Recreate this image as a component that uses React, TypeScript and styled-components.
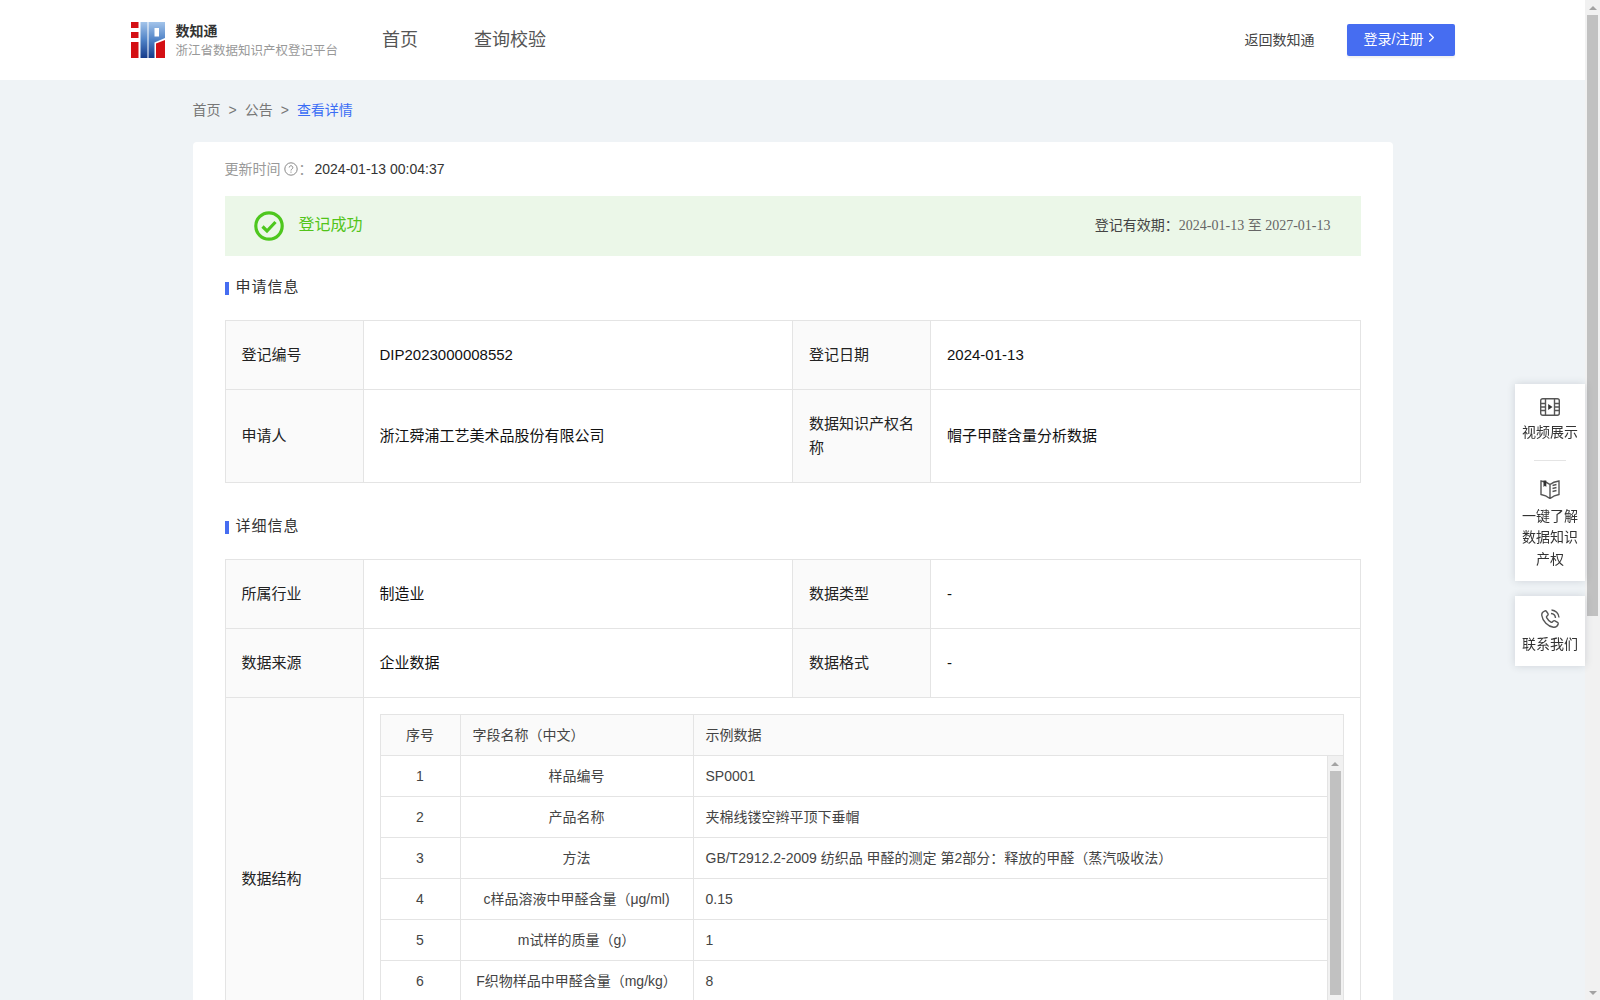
import React from "react";
import styled, { createGlobalStyle } from "styled-components";
import { ChevronRight } from "lucide-react";

const GlobalStyle = createGlobalStyle`
  body {
    margin: 0;
    background: #eff3f6;
    color: #333;
    font-family: "Liberation Sans", "Noto Sans CJK SC", sans-serif;
    font-size: 14px;
  }
`;

const Shell = styled.div`
  display: flex;
  height: 100vh;
  overflow: hidden;
`;

const Content = styled.div`
  flex: 1;
  min-width: 0;
  overflow: hidden;
`;

const Rail = styled.div`
  flex: none;
  width: 15px;
  background: #f1f1f1;
  display: flex;
  flex-direction: column;
  align-items: center;
`;

const RailArrow = styled.div<{ $down?: boolean }>`
  flex: none;
  width: 15px;
  height: 15px;
  margin-top: ${(props) => (props.$down ? "auto" : "0")};
  display: flex;
  align-items: center;
  justify-content: center;

  &::before {
    content: "";
    border-left: 4px solid transparent;
    border-right: 4px solid transparent;
    border-bottom: ${(props) => (props.$down ? "0" : "4px solid #a3a3a3")};
    border-top: ${(props) => (props.$down ? "4px solid #a3a3a3" : "0")};
  }
`;

const RailThumb = styled.div<{ $height: number }>`
  flex: none;
  width: 11px;
  height: ${(props) => props.$height}px;
  background: #c1c1c1;
`;

const Header = styled.header`
  height: 80px;
  background: #fff;
`;

const HeaderInner = styled.div`
  width: 1324px;
  height: 100%;
  margin: 0 auto;
  display: flex;
  align-items: center;
`;

const Brand = styled.a`
  display: flex;
  align-items: center;
  gap: 11px;
`;

const BrandText = styled.div`
  display: flex;
  flex-direction: column;
  margin-top: 2px;
`;

const BrandName = styled.span`
  font-size: 14px;
  line-height: 20px;
  font-weight: bold;
  color: #333;
`;

const BrandSub = styled.span`
  font-size: 12.5px;
  line-height: 20px;
  color: #999;
`;

const Nav = styled.nav`
  display: flex;
  gap: 56px;
  margin-left: 44px;
  margin-top: -4px;
`;

const NavLink = styled.a`
  font-size: 18px;
  color: #555;
`;

const HeaderRight = styled.div`
  margin-left: auto;
  display: flex;
  align-items: center;
  gap: 32px;
`;

const BackLink = styled.a`
  padding-bottom: 2px;
  font-size: 14px;
  color: #444;
`;

const LoginButton = styled.button`
  width: 108px;
  height: 32px;
  padding: 0 0 5px 2px;
  border: none;
  border-radius: 2px;
  background: #466df1;
  box-shadow: 0 2px 2px rgba(0, 0, 0, 0.06);
  color: #fff;
  font: inherit;
  font-size: 14px;
  display: flex;
  align-items: center;
  justify-content: center;
  gap: 1px;
`;

const Main = styled.main`
  width: 1200px;
  margin: 0 auto;
`;

const Breadcrumb = styled.div`
  display: flex;
  align-items: center;
  gap: 8px;
  padding: 20px 0 22px;
  line-height: 20px;
  color: #777;
`;

const Crumb = styled.span<{ $active?: boolean }>`
  color: ${(props) => (props.$active ? "#3b6df5" : "#777")};
`;

const Card = styled.section`
  padding: 16px 32px 32px;
  background: #fff;
  border-radius: 4px;
`;

const UpdateRow = styled.div`
  display: flex;
  align-items: center;
  line-height: 22px;
  color: #999;
`;

const UpdateValue = styled.span`
  margin-left: 2px;
  color: #333;
`;

const HelpIcon = styled.svg`
  width: 14px;
  height: 14px;
  margin: 0 1px 0 3px;
`;

const StatusBar = styled.div`
  height: 60px;
  margin-top: 16px;
  padding: 0 30px 0 29px;
  background: #ebf7e8;
  display: flex;
  align-items: center;
  justify-content: space-between;
`;

const StatusLeft = styled.div`
  display: flex;
  align-items: center;
  gap: 15px;
  font-size: 16px;
  color: #52c41a;
`;

const StatusText = styled.span`
  padding-bottom: 6px;
`;

const StatusDates = styled.div`
  padding-bottom: 4px;
  color: #444;
`;

const SerifDates = styled.span`
  font-family: "Liberation Serif", "Noto Sans CJK SC", serif;
  color: #666;
`;

const SectionTitle = styled.h3`
  margin: 20px 0 22px;
  display: flex;
  align-items: center;
  gap: 7px;
  font-size: 15px;
  line-height: 22px;
  font-weight: normal;
  letter-spacing: 1px;
  color: #333;

  &::before {
    content: "";
    width: 4px;
    height: 13px;
    margin-top: 2px;
    background: #466df1;
  }
`;

const InfoTable = styled.table`
  width: 1136px;
  margin-bottom: 32px;
  table-layout: fixed;
  border-collapse: collapse;
  font-size: 15px;
  line-height: 24px;
`;

const LabelCell = styled.th`
  width: 138px;
  box-sizing: border-box;
  padding: 22px 16px;
  border: 1px solid #e4e4e4;
  background: #fafafa;
  font-weight: normal;
  text-align: left;
  color: #222;
`;

const ValueCell = styled.td`
  padding: 22px 16px;
  border: 1px solid #e4e4e4;
  color: #111;
`;

const StructureCell = styled.td`
  padding: 16px;
  border: 1px solid #e4e4e4;
`;

const FieldTable = styled.div`
  border: 1px solid #e4e4e4;
  border-bottom: none;
  font-size: 14px;
  color: #444;
`;

const FieldRow = styled.div<{ $head?: boolean }>`
  display: grid;
  grid-template-columns: 79px 233px 1fr;
  height: 41px;
  box-sizing: border-box;
  border-bottom: 1px solid #e4e4e4;
  background: ${(props) => (props.$head ? "#fafafa" : "#fff")};
`;

const FieldCell = styled.div<{ $center?: boolean }>`
  display: flex;
  align-items: center;
  padding: 0 12px;
  justify-content: ${(props) => (props.$center ? "center" : "flex-start")};
  white-space: nowrap;

  & + & {
    border-left: 1px solid #e4e4e4;
  }
`;

const FieldBody = styled.div`
  display: flex;
  height: 287px;
`;

const FieldRows = styled.div`
  flex: 1;
  min-width: 0;
  border-right: 1px solid #e4e4e4;
`;

const SidePanel = styled.aside`
  position: fixed;
  top: 384px;
  right: 15px;
  width: 70px;
  display: flex;
  flex-direction: column;
  gap: 15px;
`;

const SideGroup = styled.div<{ $bottom: number }>`
  padding: 13px 0 ${(props) => props.$bottom}px;
  background: #fff;
  box-shadow: 0 0 8px rgba(40, 50, 70, 0.16);
  display: flex;
  flex-direction: column;
  align-items: center;
`;

const SideDivider = styled.div`
  width: 32px;
  height: 1px;
  margin: 16px 0 18px;
  background: #e4e4e4;
`;

const SideItem = styled.a<{ $gap: number }>`
  width: 60px;
  display: flex;
  flex-direction: column;
  align-items: center;
  gap: ${(props) => props.$gap}px;
  font-size: 14px;
  line-height: 21.5px;
  text-align: center;
  color: #333;
`;

const SideIcon = styled.svg`
  width: 20px;
  height: 20px;
  fill: none;
  stroke: #555;
  stroke-width: 1.4;
`;

const Logo = () => (
  <svg width="34" height="36" viewBox="0 0 34 36">
    <defs>
      <linearGradient id="logoBlue" x1="0" y1="0" x2="0" y2="1">
        <stop offset="0" stopColor="#a3c4ea" />
        <stop offset="0.5" stopColor="#4f82c6" />
        <stop offset="1" stopColor="#143a8a" />
      </linearGradient>
    </defs>
    <path d="M0 0h7.500v6H0zM0 10h7.500v6H0zM0 20h7.500v16H0z" fill="#d40f14" />
    <path d="M9.500 0h7v36h-7z" fill="url(#logoBlue)" />
    <path
      d="M17.500 0H34V16L23.500 20.500V36H17.500ZM23.500 6V14.500H28V6Z"
      fill="url(#logoBlue)"
      fillRule="evenodd"
    />
    <path d="M25 21.500L34 18V36H25Z" fill="#d40f14" />
  </svg>
);

const SuccessIcon = () => (
  <svg width="30" height="30" viewBox="0 0 30 30" fill="none">
    <circle cx="15" cy="15" r="13.200" stroke="#4ec71e" strokeWidth="3.200" />
    <path d="M8.500 15.500L13 20L21.500 11" stroke="#4ec71e" strokeWidth="3.200" />
  </svg>
);

const fieldRows = [
  ["1", "样品编号", "SP0001"],
  ["2", "产品名称", "夹棉线镂空辫平顶下垂帽"],
  ["3", "方法", "GB/T2912.2-2009 纺织品 甲醛的测定 第2部分：释放的甲醛（蒸汽吸收法）"],
  ["4", "c样品溶液中甲醛含量（μg/ml)", "0.15"],
  ["5", "m试样的质量（g）", "1"],
  ["6", "F织物样品中甲醛含量（mg/kg）", "8"],
  ["7", "-", "-"],
];

function App() {
  return (
    <>
      <GlobalStyle />
      <Shell>
        <Content>
          <Header>
            <HeaderInner>
              <Brand>
                <Logo />
                <BrandText>
                  <BrandName>数知通</BrandName>
                  <BrandSub>浙江省数据知识产权登记平台</BrandSub>
                </BrandText>
              </Brand>
              <Nav>
                <NavLink>首页</NavLink>
                <NavLink>查询校验</NavLink>
              </Nav>
              <HeaderRight>
                <BackLink>返回数知通</BackLink>
                <LoginButton>
                  登录/注册
                  <ChevronRight size={15} strokeWidth={2} />
                </LoginButton>
              </HeaderRight>
            </HeaderInner>
          </Header>

          <Main>
            <Breadcrumb>
              <Crumb>首页</Crumb>
              <Crumb>&gt;</Crumb>
              <Crumb>公告</Crumb>
              <Crumb>&gt;</Crumb>
              <Crumb $active>查看详情</Crumb>
            </Breadcrumb>

            <Card>
              <UpdateRow>
                更新时间
                <HelpIcon viewBox="0 0 14 14" fill="none" stroke="#888">
                  <circle cx="7" cy="7" r="6.200" />
                  <path d="M5.200 5.500a1.800 1.800 0 1 1 2.700 1.600c-.7.400-.9.700-.9 1.400M7 9.600v1.100" />
                </HelpIcon>
                ：<UpdateValue>2024-01-13 00:04:37</UpdateValue>
              </UpdateRow>

              <StatusBar>
                <StatusLeft>
                  <SuccessIcon />
                  <StatusText>登记成功</StatusText>
                </StatusLeft>
                <StatusDates>
                  登记有效期：<SerifDates>2024-01-13 至 2027-01-13</SerifDates>
                </StatusDates>
              </StatusBar>

              <SectionTitle>申请信息</SectionTitle>
              <InfoTable>
                <tbody>
                  <tr>
                    <LabelCell>登记编号</LabelCell>
                    <ValueCell>DIP2023000008552</ValueCell>
                    <LabelCell>登记日期</LabelCell>
                    <ValueCell>2024-01-13</ValueCell>
                  </tr>
                  <tr>
                    <LabelCell>申请人</LabelCell>
                    <ValueCell>浙江舜浦工艺美术品股份有限公司</ValueCell>
                    <LabelCell>数据知识产权名称</LabelCell>
                    <ValueCell>帽子甲醛含量分析数据</ValueCell>
                  </tr>
                </tbody>
              </InfoTable>

              <SectionTitle>详细信息</SectionTitle>
              <InfoTable>
                <tbody>
                  <tr>
                    <LabelCell>所属行业</LabelCell>
                    <ValueCell>制造业</ValueCell>
                    <LabelCell>数据类型</LabelCell>
                    <ValueCell>-</ValueCell>
                  </tr>
                  <tr>
                    <LabelCell>数据来源</LabelCell>
                    <ValueCell>企业数据</ValueCell>
                    <LabelCell>数据格式</LabelCell>
                    <ValueCell>-</ValueCell>
                  </tr>
                  <tr>
                    <LabelCell>数据结构</LabelCell>
                    <StructureCell colSpan={3}>
                      <FieldTable>
                        <FieldRow $head>
                          <FieldCell $center>序号</FieldCell>
                          <FieldCell>字段名称（中文）</FieldCell>
                          <FieldCell>示例数据</FieldCell>
                        </FieldRow>
                        <FieldBody>
                          <FieldRows>
                            {fieldRows.map((row) => (
                              <FieldRow key={row[0]}>
                                <FieldCell $center>{row[0]}</FieldCell>
                                <FieldCell $center>{row[1]}</FieldCell>
                                <FieldCell>{row[2]}</FieldCell>
                              </FieldRow>
                            ))}
                          </FieldRows>
                          <Rail>
                            <RailArrow />
                            <RailThumb $height={224} />
                            <RailArrow $down />
                          </Rail>
                        </FieldBody>
                      </FieldTable>
                    </StructureCell>
                  </tr>
                </tbody>
              </InfoTable>
            </Card>
          </Main>
        </Content>

        <Rail>
          <RailArrow />
          <RailThumb $height={601} />
          <RailArrow $down />
        </Rail>
      </Shell>

      <SidePanel>
        <SideGroup $bottom={11}>
          <SideItem $gap={5}>
            <SideIcon viewBox="0 0 20 20">
              <rect x="0.700" y="1.700" width="18.600" height="16.600" rx="2" />
              <path d="M5.500 2v16M14.500 2v16M1 6.500h4.500M1 10h4.500M1 13.500h4.500M14.500 6.500H19M14.500 10H19M14.500 13.500H19" />
              <path d="M8.200 7L12.500 10L8.200 13Z" fill="#333" stroke="none" />
            </SideIcon>
            视频展示
          </SideItem>
          <SideDivider />
          <SideItem $gap={7}>
            <SideIcon viewBox="0 0 20 20">
              <path d="M10 5.500C8 3.800 5 2.500 1 2v13.500c3.500.5 6.500 2 9 4 2.500-2 5.500-3.500 9-4V2c-4 .5-7 1.800-9 3.500ZM10 5.500v14" />
              <path d="M3.500 1.500h2.800v6.500L4.900 6.800 3.500 8Z" fill="#333" stroke="none" />
              <path d="M12.500 6.500l4-1M12.500 9.500l4-1M12.500 12.500l4-1" />
            </SideIcon>
            一键了解数据知识产权
          </SideItem>
        </SideGroup>
        <SideGroup $bottom={10}>
          <SideItem $gap={5}>
            <SideIcon viewBox="0 0 20 20">
              <path d="M5 1.800C3 2.500 1.500 4.200 1.800 6.500 2.500 12 8 17.500 13.500 18.200c2.300.3 4-1.200 4.700-3.200.2-.7-.1-1.200-.7-1.600l-2.600-1.600c-.6-.3-1.100-.3-1.600.2l-1 1c-.4.400-.9.400-1.400.1-1.800-1-3.300-2.600-4.300-4.400-.3-.5-.2-1 .2-1.400l1-1c.5-.5.500-1 .2-1.600L6.500 2.500C6.100 1.900 5.600 1.600 5 1.800Z" />
              <path d="M11 4.500c2.400.2 4.300 2.100 4.500 4.500M11.500 1c4 .3 7.200 3.500 7.500 7.500" />
            </SideIcon>
            联系我们
          </SideItem>
        </SideGroup>
      </SidePanel>
    </>
  );
}

export default App;
